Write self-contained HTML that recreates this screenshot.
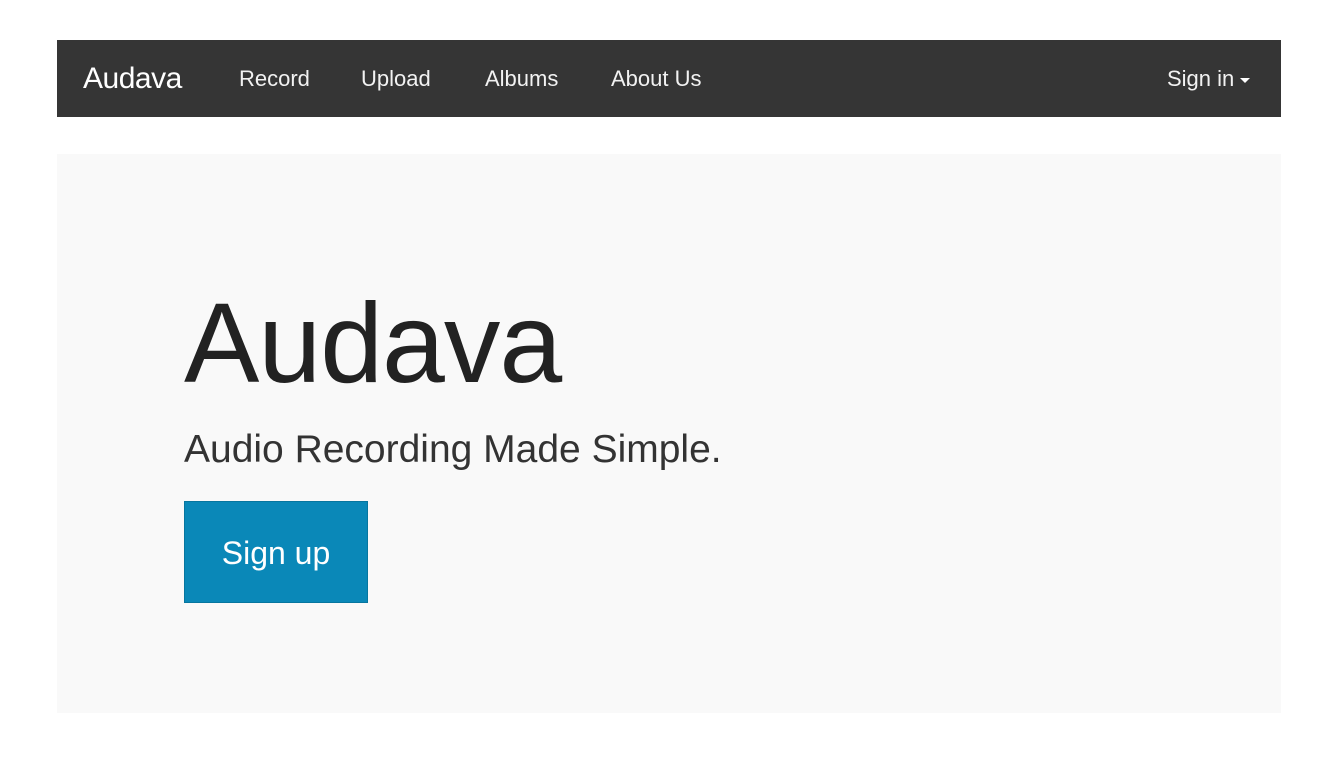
<!DOCTYPE html>
<html><head><meta charset="utf-8"><style>
body{margin:0;background:#fff;width:1325px;height:781px;overflow:hidden;font-family:"Liberation Sans",sans-serif;}
.nav{position:absolute;left:57px;top:40px;width:1224px;height:77px;background:#353535;color:#fff;}
.nav span{position:absolute;top:0;line-height:77px;font-size:22px;color:#f2f2f2;}
.brand{font-size:30px!important;color:#fff!important;letter-spacing:-0.5px}
.caret{display:inline-block;width:0;height:0;border-left:5px solid transparent;border-right:5px solid transparent;border-top:5px solid #fff;vertical-align:middle;margin-left:6px;}
.jumbo{position:absolute;left:57px;top:154px;width:1224px;height:559px;background:#f9f9f9;}
h1{position:absolute;left:127px;top:119px;margin:0;font-size:113px;font-weight:300;line-height:140px;color:#222;letter-spacing:-1px}
.sub{position:absolute;left:127px;top:271px;font-size:39px;color:#333;line-height:50px;}
.btn{position:absolute;left:127px;top:347px;width:184px;height:102px;background:#0a88b8;color:#fff;font-size:32px;line-height:102px;text-align:center;box-sizing:border-box;border:1px solid #07769f;}
</style></head><body>
<div class="nav">
<span class="brand" style="left:26px">Audava</span>
<span style="left:182px">Record</span>
<span style="left:304px">Upload</span>
<span style="left:428px">Albums</span>
<span style="left:554px">About Us</span>
<span style="left:1110px">Sign in<i class="caret"></i></span>
</div>
<div class="jumbo">
<h1>Audava</h1>
<div class="sub">Audio Recording Made Simple.</div>
<div class="btn">Sign up</div>
</div>
</body></html>
